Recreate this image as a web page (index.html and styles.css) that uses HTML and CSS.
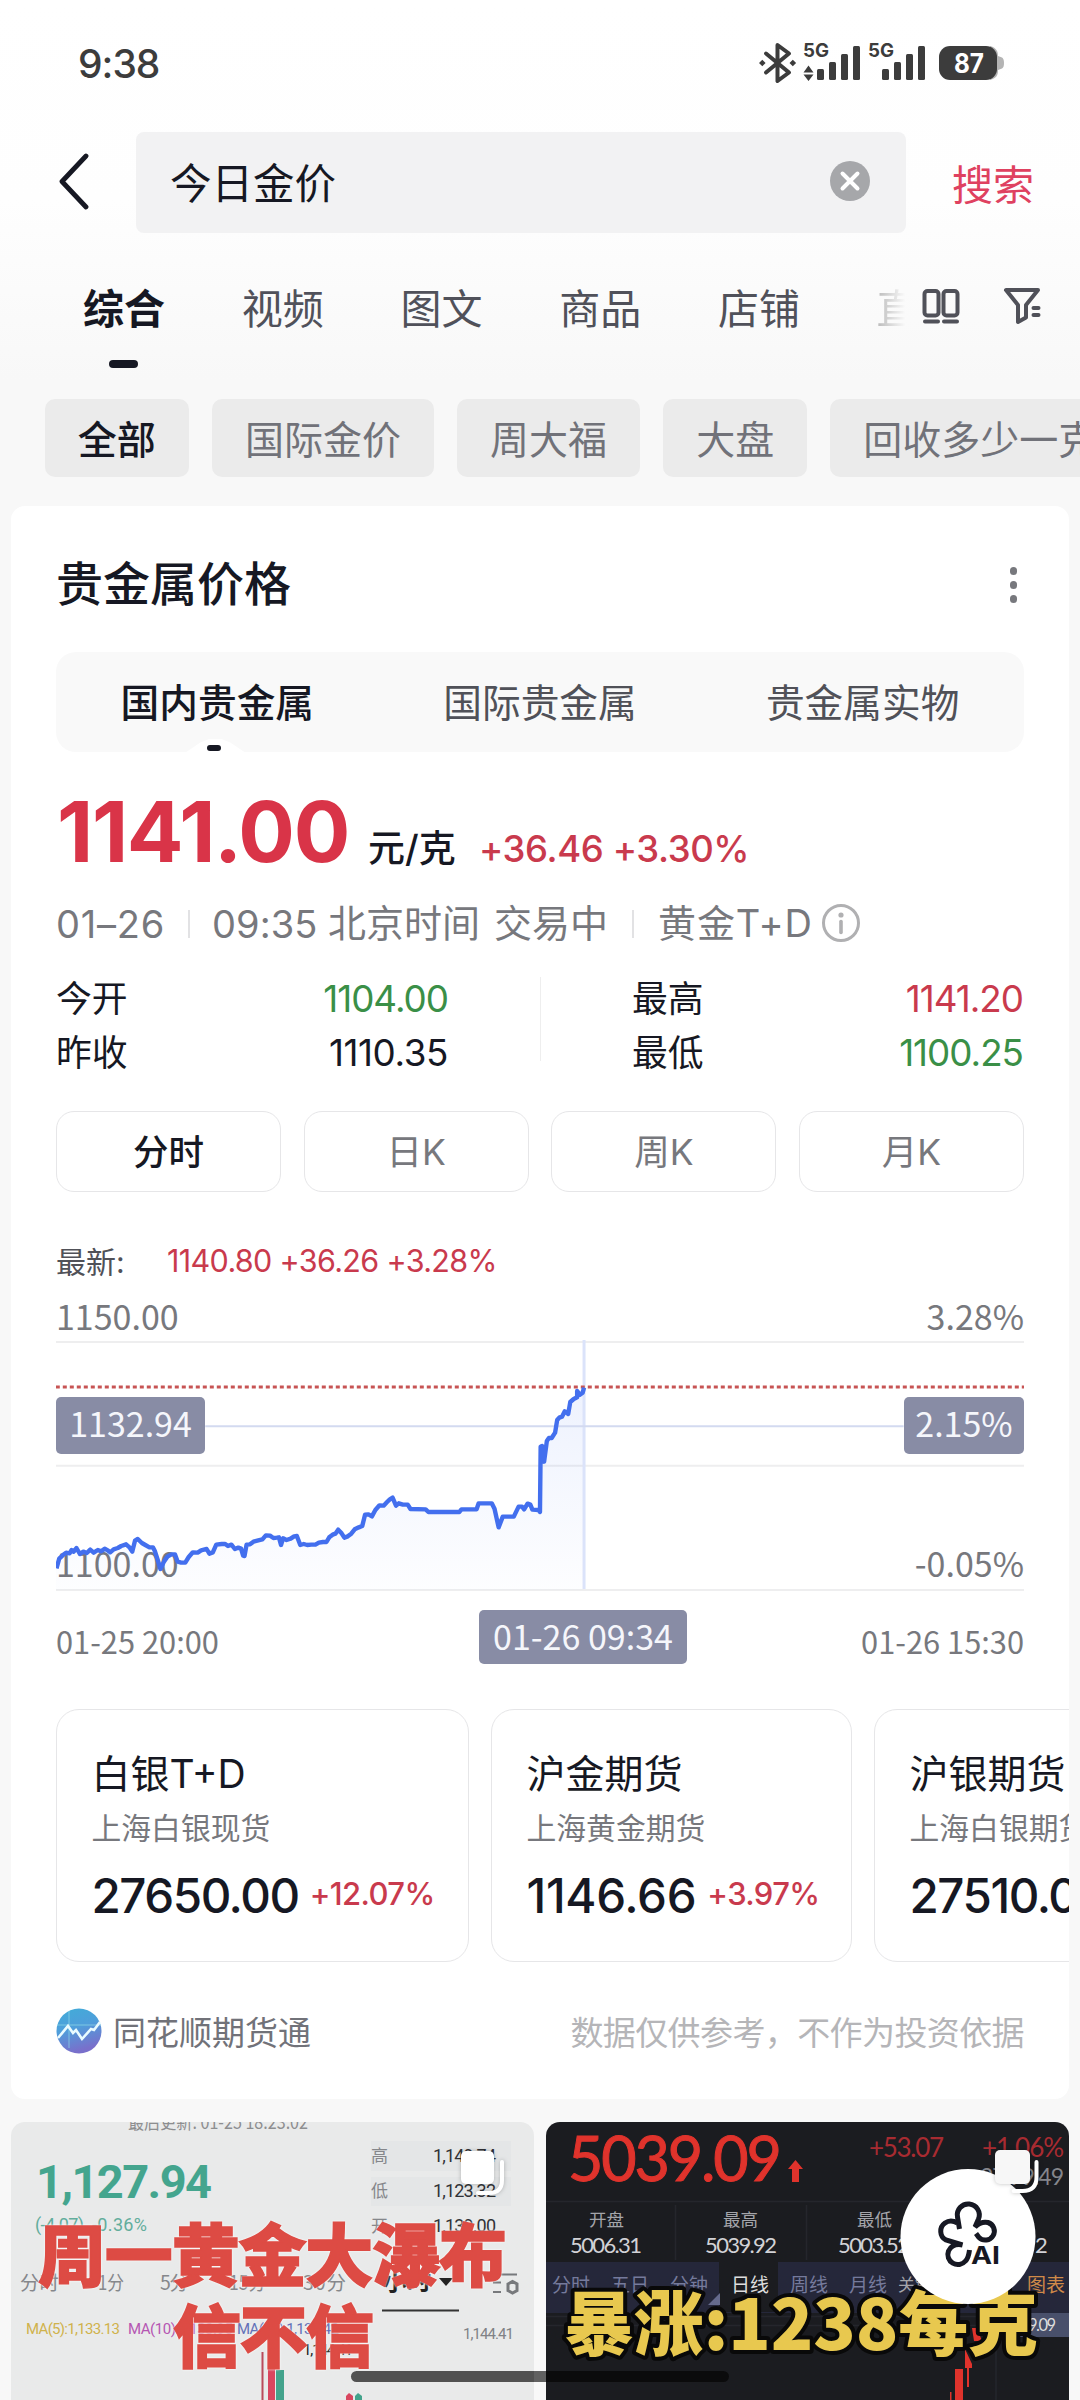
FILE: index.html
```html
<!DOCTYPE html>
<html lang="zh-CN">
<head>
<meta charset="utf-8">
<title>今日金价</title>
<link rel="stylesheet" href="styles.css">
</head>
<body>
<div class="screen">
  <header class="status">
    <span class="clock">9:38</span>
    <svg class="status-icons" width="250" height="50" viewBox="755 38 250 50">
      <g fill="none" stroke="#3c3c3c" stroke-width="4" stroke-linecap="round" stroke-linejoin="round">
        <path d="M766 53.500L789 72.500L777.500 81V45L789 53.500L766 72.500"/>
      </g>
      <g fill="#3c3c3c">
        <path d="M759 63l3.300-3.300 3.300 3.300-3.300 3.300zM789.500 63l3.300-3.300 3.300 3.300-3.300 3.300z"/>
        <path d="M803.500 72.500l5-7 5 7zM803.500 74.500l5 6.500 5-6.500z"/>
        <rect x="817" y="69" width="7" height="11" rx="1.500"/><rect x="829" y="62" width="7" height="18" rx="1.500"/><rect x="841" y="54" width="7" height="26" rx="1.500"/><rect x="853" y="46" width="7" height="34" rx="1.500"/>
        <rect x="882" y="69" width="7" height="11" rx="1.500"/><rect x="894" y="62" width="7" height="18" rx="1.500"/><rect x="906" y="54" width="7" height="26" rx="1.500"/><rect x="918" y="46" width="7" height="34" rx="1.500"/>
      </g>
      <path d="M990 46c7 2 8 6 8 10l4 1.500q2 1 2 5.500t-2 5.500l-4 1.500c0 5-1 8-8 10z" fill="#b4b4b4"/>
      <rect x="939" y="46" width="58" height="34" rx="11" fill="#3c3c3c"/>
      <g class="st-text" fill="#3c3c3c">
        <text x="803" y="57" font-size="18.500" textLength="26" lengthAdjust="spacingAndGlyphs">5G</text>
        <text x="868" y="57" font-size="18.500" textLength="26" lengthAdjust="spacingAndGlyphs">5G</text>
        <text x="954" y="73" font-size="27" fill="#fff" textLength="30" lengthAdjust="spacingAndGlyphs">87</text>
      </g>
    </svg>
  </header>

  <div class="search">
    <svg class="back" width="32" height="60" viewBox="0 0 32 60"><path d="M29 4L5 29.500L29 55" fill="none" stroke="#161823" stroke-width="4.800" stroke-linecap="round" stroke-linejoin="round"/></svg>
    <div class="field"><span>今日金价</span>
      <svg width="40" height="40" viewBox="0 0 40 40"><circle cx="20" cy="20" r="20" fill="#a6a7aa"/><path d="M12.500 12.500l15 15m0-15l-15 15" stroke="#fff" stroke-width="4" stroke-linecap="round"/></svg>
    </div>
    <span class="go">搜索</span>
  </div>

  <nav class="tabs">
    <div class="tab active">综合</div><div class="tab">视频</div><div class="tab">图文</div><div class="tab">商品</div><div class="tab">店铺</div><div class="tab cut">直</div>
    <svg class="tools" width="124" height="40" viewBox="920 286 124 40" fill="none" stroke="#505159" stroke-width="4" stroke-linecap="round" stroke-linejoin="round">
      <rect x="925.500" y="291" width="14" height="24.500" rx="3"/><rect x="944.500" y="291" width="14" height="24.500" rx="3"/><path d="M926 321.500h13M945 321.500h13"/>
      <path d="M1007 290h32L1027 305v12.500l-8 4.500v-17zM1034.500 308h5M1034.500 315h5"/>
    </svg>
  </nav>

  <div class="chips"><span class="chip on">全部</span><span class="chip">国际金价</span><span class="chip">周大福</span><span class="chip">大盘</span><span class="chip">回收多少一克</span></div>

  <section class="card">
    <div class="head"><h2>贵金属价格</h2><div class="dots"><i></i><i></i><i></i></div></div>
    <div class="seg"><span class="on">国内贵金属</span><span>国际贵金属</span><span>贵金属实物</span></div>
    <div class="price"><b>1141.00</b><span class="unit">元/克</span><span class="chg">+36.46 +3.30%</span></div>
    <div class="meta"><span class="m1">01–26</span><i></i><span class="m2">09:35</span><span class="m3">北京时间</span><span class="m3">交易中</span><i></i><span class="m4">黄金T+D</span>
      <svg width="40" height="40" viewBox="0 0 40 40"><circle cx="20" cy="20" r="17.500" fill="none" stroke="#b0b0b2" stroke-width="3"/><circle cx="20" cy="12" r="2.600" fill="#b0b0b2"/><path d="M20 18.500v11" stroke="#b0b0b2" stroke-width="3.600" stroke-linecap="round"/></svg>
    </div>
    <div class="stats">
      <dl><dt>今开</dt><dd class="down">1104.00</dd><dt>昨收</dt><dd class="prev">1110.35</dd></dl>
      <dl><dt>最高</dt><dd class="up">1141.20</dd><dt>最低</dt><dd class="down">1100.25</dd></dl>
    </div>
    <div class="periods"><span class="on">分时</span><span>日K</span><span>周K</span><span>月K</span></div>
    <div class="latest"><span>最新:</span><em>1140.80 +36.26 +3.28%</em></div>
    <div class="chart">
      <div class="axis top"><span>1150.00</span><span>3.28%</span></div>
      <div class="plot">
        <div class="axis low"><span>1100.00</span><span>-0.05%</span></div>
        <svg width="968" height="254" viewBox="81.300 150 1405.500 762" preserveAspectRatio="none">
          <defs><linearGradient id="fade" x1="0" y1="0" x2="0" y2="1"><stop offset="0" stop-color="#3f6df0" stop-opacity=".09"/><stop offset="1" stop-color="#3f6df0" stop-opacity=".01"/></linearGradient></defs>
          <g fill="none" stroke="#eeeeef" stroke-width="2"><path vector-effect="non-scaling-stroke" d="M81 156H1487M81 527H1487M81 900H1487"/></g>
          <path fill="url(#fade)" d="M81 835L88 795L110 782L190 770L200 748L225 775L233 835L250 795L262 820L290 785L320 765L352 785L390 735L430 745L440 765L470 758L490 725L505 742L530 680L550 650L570 625L580 645L620 663H668L692 658L695 640H715L724 712L730 680H747L755 650L783 665L786 468L793 490L795 445L805 430L812 385L825 365L830 325L848 293V900H81z"/>
          <path vector-effect="non-scaling-stroke" stroke="#dbe3fa" stroke-width="3" d="M848 150V897"/>
          <path vector-effect="non-scaling-stroke" stroke="#d3daf0" stroke-width="2" d="M298 409H1312"/>
          <path vector-effect="non-scaling-stroke" stroke="#c75454" stroke-width="3" stroke-dasharray="4 3" d="M81 291H1487"/>
          <path vector-effect="non-scaling-stroke" fill="none" stroke="#436fee" stroke-width="4.400" stroke-linejoin="round" d="M82 835L86 806L91 796L96 788L101 790L104 780L107 785L111 774L116 792L121 785L126 789L131 779L136 788L142 780L147 784L152 776L157 782L160 787L165 778L171 774L176 768L183 763L188 772L192 785L196 752L200 747L206 759L211 765L217 772L222 772L225 784L229 810L233 837L238 815L243 800L249 793L254 793L258 815L263 818L269 818L274 801L280 787L287 788L292 781L296 779L300 777L304 791L309 787L314 764L322 762L327 762L331 768L336 764L341 777L346 773L350 776L353 797L355 798L358 764L363 763L368 755L375 751L381 748L386 736L392 737L397 744L402 743L405 742L408 765L411 745L416 750L422 746L427 739L431 738L436 765L441 762L446 765L452 764L458 764L463 758L469 756L474 756L478 742L483 734L487 731L491 719L496 730L500 743L505 739L510 731L515 718L521 712L526 708L530 674L535 673L540 679L545 660L551 646L557 647L562 636L566 628L570 623L575 647L579 640L585 644L592 644L596 657L618 658L622 666H667L670 658H692L695 640H714L718 656L724 712L730 680H746L753 650H758L761 658L766 641L770 644L773 659L782 660L784 666L785 470L787 468L790 515L794 453L797 444L801 444L806 428L809 390L812 383L816 380L820 364L825 372L828 336L833 327L838 322L838 303L842 314L846 308L848 293"/>
        </svg>
        <span class="tag left">1132.94</span><span class="tag right">2.15%</span>
      </div>
      <div class="times"><span>01-25 20:00</span><span class="tag now">01-26 09:34</span><span>01-26 15:30</span></div>
    </div>
    <div class="quotes">
      <article class="q1"><h3>白银T+D</h3><p>上海白银现货</p><div><b>27650.00</b><em>+12.07%</em></div></article>
      <article class="q2"><h3>沪金期货</h3><p>上海黄金期货</p><div><b>1146.66</b><em>+3.97%</em></div></article>
      <article class="q3"><h3>沪银期货</h3><p>上海白银期货</p><div><b>27510.00</b></div></article>
    </div>
    <footer>
      <svg width="46" height="46" viewBox="0 0 46 46"><defs><linearGradient id="lg" x1="0" y1="0" x2="0.300" y2="1"><stop offset="0" stop-color="#41add8"/><stop offset=".5" stop-color="#4f9edb"/><stop offset="1" stop-color="#796fcb"/></linearGradient></defs><circle cx="23" cy="23" r="22.500" fill="url(#lg)"/><path d="M1 17H45M13 3V40" stroke="#8fd9e6" stroke-width="1" opacity=".7"/><path d="M2 30L12 18L17 25L20 22L26 31L35 21L38 22L44 14" fill="none" stroke="#e9fbff" stroke-width="2.600"/></svg>
      <span class="src">同花顺期货通</span><span class="note">数据仅供参考，不作为投资依据</span>
    </footer>
  </section>

  <div class="results">
    <svg class="thumb" width="523" height="278" viewBox="11 2122 523 278">
      <rect x="11" y="2122" width="523" height="278" fill="#e9eaea"/>
      <g fill="#e4e6e7"><rect x="371" y="2141" width="140" height="30"/><rect x="371" y="2177" width="140" height="29"/></g>
      <text x="128" y="2129" font-size="18" fill="#8d8e90" textLength="180" lengthAdjust="spacingAndGlyphs">最后更新: 01-25 18:23:02</text>
      <text class="din" x="36" y="2198" font-size="47" font-weight="700" fill="#44a58e" textLength="176">1,127.94</text>
      <g class="din" font-size="18"><text x="35" y="2231" fill="#62ad9c" textLength="49">(-4.07)</text><text x="92" y="2231" fill="#62ad9c" textLength="55">-0.36%</text>
        <g fill="#303236"><text x="433" y="2162" textLength="63">1,149.74</text><text x="433" y="2197" textLength="63">1,123.32</text><text x="433" y="2232" textLength="63">1,139.00</text></g></g>
      <g font-size="17" fill="#85878b"><text x="371" y="2162">高</text><text x="371" y="2197">低</text><text x="371" y="2232">开</text></g>
      <g font-size="19.500" fill="#85878b"><text x="20" y="2290">分时</text><text x="98" y="2290" textLength="26" lengthAdjust="spacingAndGlyphs">1分</text><text x="160" y="2290" textLength="29">5分</text><text x="229" y="2290" textLength="37" lengthAdjust="spacingAndGlyphs">15分</text><text x="303" y="2290" textLength="43">30分</text><text x="383" y="2290" font-size="24" font-weight="700" fill="#222">小时</text></g>
      <path d="M439 2278h14l-7 8z" fill="#222"/><path d="M382 2310.500h77" stroke="#333" stroke-width="2"/>
      <g fill="none" stroke="#77797c" stroke-width="2"><path d="M493 2282.500h8M493 2292h8M500 2274.500h17"/><path d="M508 2284l4.500-2.500 4.500 2.500v6.500l-4.500 2.500-4.500-2.500z" stroke-width="3"/></g>
      <g class="din" font-size="15"><text x="26" y="2334" fill="#d0b24c" textLength="94">MA(5):1,133.13</text><text x="128" y="2334" fill="#b556b2" textLength="105">MA(10):1,133.95</text><text x="237" y="2334" fill="#6270b8" textLength="102">MA(20):1,134.42</text><text x="463" y="2339" fill="#808286" textLength="51">1,144.41</text><text x="303" y="2355" fill="#222" textLength="50">1,144.41</text></g>
      <path d="M262.500 2352v48" stroke="#b94b5b" stroke-width="2"/><rect x="268" y="2368" width="7" height="32" fill="#d9465f"/><rect x="276" y="2370" width="8" height="30" fill="#43a38c"/>
      <path d="M346 2396l3-3 4 3v4h-7z" fill="#d9465f"/><path d="M355 2396l3-3 4 3v4h-7z" fill="#43a38c"/>
      <g class="headline" font-size="68" fill="#dd4b44" stroke="#dd4b44" stroke-width="1.500"><text x="38" y="2281" textLength="469">周一黄金大瀑布</text><text x="173" y="2362" textLength="201">信不信</text></g>
      <g class="stackicon"><path d="M502 2162v18q0 13-13 13h-11" fill="none" stroke="#fff" stroke-width="4" stroke-linecap="round"/><rect x="461" y="2151" width="33" height="33" rx="5" fill="#fff"/></g>
    </svg>
    <svg class="thumb" width="523" height="278" viewBox="546 2122 523 278">
      <rect x="546" y="2122" width="523" height="278" fill="#1b1c20"/>
      <rect x="546" y="2262" width="523" height="51" fill="#25273a"/><rect x="719" y="2262" width="59" height="50" fill="#1b1c20"/>
      <path d="M546 2201.500H1069M675.500 2205V2260M806.500 2205V2260M546 2316.500H1069M546 2325.500H1069M996 2337V2400" stroke="#25262c" stroke-width="1.500" fill="none"/>
      <path d="M708 2305h12v-12z" fill="#656a8c"/>
      <g class="lato"><text x="568" y="2181" font-size="61" fill="#e0332c" stroke="#e0332c" textLength="214">5039.09</text>
        <g font-size="26" fill="#a82b31"><text x="869" y="2157" textLength="75">+53.07</text><text x="982" y="2157" textLength="82">+1.06%</text></g>
        <text x="980" y="2185" font-size="23" fill="#85868c" textLength="84">27.99.49</text>
        <g font-size="22" fill="#d2d2d6"><text x="570" y="2253" textLength="72">5006.31</text><text x="705" y="2253" textLength="72">5039.92</text><text x="838" y="2253" textLength="72">5003.52</text><text x="1035" y="2253">2</text></g></g>
      <path d="M788 2169l7.500-9 7.500 9h-4v13h-7v-13z" fill="#e0332c"/>
      <g font-size="17.500" fill="#a4a5aa"><text x="589" y="2226">开盘</text><text x="723" y="2226">最高</text><text x="857" y="2226">最低</text></g>
      <g font-size="19" fill="#757a9c"><text x="552" y="2292">分时</text><text x="611" y="2292">五日</text><text x="670" y="2292">分钟</text><text x="731" y="2292" fill="#ddd">日线</text><text x="790" y="2292">周线</text><text x="849" y="2292">月线</text><text x="898" y="2291" font-size="17" fill="#a4a5aa">关键</text><text x="1027" y="2292" fill="#d08a49">图表</text></g>
      <rect x="1020" y="2313" width="49" height="24" fill="#49506b"/><text class="lato" x="1028" y="2331" font-size="16.500" fill="#ddd" textLength="28">9.09</text>
      <g fill="#e0332c"><path d="M972 2328h5l5 13h-8zM965 2349l7 15v4h-7z"/><rect x="967" y="2363" width="2" height="24"/><rect x="955" y="2369" width="8" height="31"/><rect x="950" y="2392" width="1.500" height="8"/></g>
      <text class="gold" x="564" y="2350" font-size="70" textLength="474" lengthAdjust="spacingAndGlyphs" fill="#e8c84f">暴涨:1238每克</text>
    </svg>
  </div>
  <svg class="fab" width="150" height="170" viewBox="895 2140 150 170">
    <circle cx="968" cy="2236.500" r="67.500" fill="#fff"/>
    <g class="stackicon"><path d="M1036.500 2162v15q0 14-14 14h-9" fill="none" stroke="#fff" stroke-width="4" stroke-linecap="round"/><rect x="995" y="2150" width="35" height="34" rx="5" fill="#f7f7f7"/></g>
    <g fill="none" stroke="#161823" stroke-width="5">
      <path d="M959.500 2229L957.500 2217a11 11 0 1 1 21 2L975 2227q6-6 13-4.500a9 9 0 1 1-9 15l-3-4"/>
      <path d="M957.500 2223q-7-4-12.500 0a10 10 0 0 0 1 17l16.500 5q-10-2-14 6a10 10 0 0 0 17 10q3-3 4-11"/>
    </g>
    <text class="st-text" x="971" y="2264" font-size="24" fill="#161823" textLength="29" lengthAdjust="spacingAndGlyphs">AI</text>
  </svg>
  <div class="homebar"></div>
</div>
</body>
</html>
```
FILE: styles.css
```css
* { box-sizing: border-box; margin: 0; padding: 0; }
body { width: 1080px; height: 2400px; overflow: hidden; font-family: Inter, "Noto Sans CJK SC", sans-serif; color: #161823; }
i, em { font-style: normal; }
span, b, em, h2, h3, p { white-space: nowrap; }
svg { display: block; flex: none; }
.screen { position: relative; width: 1080px; height: 2400px; overflow: hidden; background: linear-gradient(#fff 0, #fefefe 200px, #f8f8f8 380px); }
.st-text { font-family: Inter, sans-serif; font-weight: 700; }

.status { height: 132px; padding: 38px 75px 0 78px; display: flex; justify-content: space-between; }
.clock { font-size: 39px; line-height: 51px; font-weight: 500; color: #3c3c3c; letter-spacing: -1px; }

.search { height: 101px; display: flex; align-items: center; padding-left: 57px; }
.back { margin-top: -1px; }
.field { width: 770px; height: 101px; margin-left: 47px; padding: 0 36px 3px 34px; border-radius: 8px; background: #f2f2f3; display: flex; align-items: center; justify-content: space-between; font-size: 41.500px; }
.go { margin: -2px 0 0 46px; font-size: 41px; color: #df4160; }

.tabs { height: 166px; display: flex; padding-left: 44.500px; overflow: hidden; }
.tab { width: 158.800px; flex: none; text-align: center; font-size: 41px; line-height: 60px; padding-top: 46px; color: #50515a; }
.tab.active { color: #161823; font-weight: 700; }
.tab.active::after { content: ""; display: block; width: 29px; height: 8px; border-radius: 4px; margin: 21px auto 0; background: #161823; }
.tab.cut { width: 42px; margin-left: 38px; text-align: left; color: #777; -webkit-mask: linear-gradient(90deg, rgba(0,0,0,.5), transparent 70%); mask: linear-gradient(90deg, rgba(0,0,0,.5), transparent 70%); }
.tools { margin: 53px 0 0 1px; }

.chips { display: flex; gap: 23.500px; padding-left: 45px; height: 78px; }
.chip { flex: none; height: 78px; padding: 0 32.800px; border-radius: 10px; background: #ebebeb; font-size: 39px; line-height: 81px; color: #717279; }
.chip.on { color: #161823; font-weight: 500; }

.card { width: 1058px; height: 1593px; margin: 29px 11px 0; padding: 0 45px; border-radius: 14px; background: #fff; overflow: hidden; }
.head { height: 146px; padding-top: 44px; display: flex; justify-content: space-between; align-items: flex-start; }
.head h2 { font-size: 47px; line-height: 68px; font-weight: 500; }
.dots { display: flex; flex-direction: column; gap: 6.500px; margin: 17px 7px 0 0; }
.dots i { width: 7.500px; height: 7.500px; border-radius: 50%; background: #77787d; }

.seg { height: 100px; border-radius: 20px; background: #f9f9f9; display: grid; grid-template-columns: repeat(3, 1fr); }
.seg span { position: relative; text-align: center; font-size: 38.700px; line-height: 102px; color: #505158; }
.seg .on { font-weight: 500; color: #161823; }
.seg .on::before { content: ""; position: absolute; left: 50%; bottom: 0; width: 64px; height: 15px; margin-left: -34px; background: #fff; clip-path: polygon(0 100%, 26% 25%, 40% 0, 60% 0, 74% 25%, 100% 100%); }
.seg .on::after { content: ""; position: absolute; left: 50%; bottom: 3px; width: 14px; height: 6px; margin-left: -10px; border-radius: 3px; background: #161823; }

.price { height: 138px; display: flex; align-items: baseline; padding-top: 28px; line-height: 103px; }
.price b { width: 312px; padding-left: 1px; font-size: 84px; font-weight: 700; color: #d93448; letter-spacing: -1.300px; }
.unit { width: 111px; font-size: 37px; font-weight: 500; }
.chg { font-size: 36.500px; font-weight: 500; color: #c93a4d; letter-spacing: -.4px; }

.meta { height: 68px; display: flex; align-items: center; color: #77787d; font-size: 38px; line-height: 60px; }
.meta i { width: 2px; height: 28px; background: #e2e2e4; }
.m1 { width: 132px; letter-spacing: .8px; }
.m2 { width: 116px; margin-left: 22px; letter-spacing: .1px; }
.m3 { margin-right: 14px; }
.m3, .m4 { margin-top: -3px; }
.m3 + i { margin: 0 24px 0 10px; }
.m4 { letter-spacing: .9px; }
.meta svg { margin: -2px 0 0 8px; }

.stats { height: 98px; display: grid; grid-template-columns: 484px 484px; margin-top: 14px; }
.stats dl { display: grid; grid-template-columns: auto auto; justify-content: space-between; grid-auto-rows: 54px; line-height: 54px; font-size: 35.800px; padding-right: 92px; }
.stats dl + dl { padding: 0 1px 0 92px; background: linear-gradient(#eee, #eee) 0 5px / 1px 84px no-repeat; }
.stats dd { text-align: right; font-size: 36.800px; letter-spacing: -1px; }
.stats .prev { letter-spacing: -.4px; }
.down { color: #3a8f47; }
.up { color: #c93a4d; }

.periods { display: grid; grid-template-columns: repeat(4, 225px); justify-content: space-between; margin-top: 41px; }
.periods span { height: 81px; border: 1.500px solid #e6e6e8; border-radius: 18px; text-align: center; font-size: 35.500px; line-height: 81px; color: #77787d; }
.periods .on { color: #161823; font-weight: 500; }

.latest { height: 62px; margin-top: 37px; display: flex; align-items: center; font-size: 30px; color: #505158; }
.latest span { width: 111px; }
.latest em { color: #c93a4d; font-size: 30.500px; letter-spacing: -.65px; }

.chart { font-family: "Noto Sans CJK SC", sans-serif; color: #77787d; }
.axis { display: flex; justify-content: space-between; font-size: 34px; line-height: 50px; }
.axis.top { height: 49px; }
.plot { height: 254px; position: relative; }
.axis.low { position: absolute; inset: 198px 0 auto; }
.plot svg { position: relative; }
.tag { border-radius: 5px; background: #888ca5; color: #f5f6fb; font-size: 34px; text-align: center; }
.tag.left, .tag.right { position: absolute; top: 57px; height: 57px; line-height: 52px; }
.tag.left { left: 0; width: 149px; }
.tag.right { right: 0; width: 120px; }
.times { display: grid; grid-template-columns: 423px 208px 1fr; margin-top: 16px; font-size: 30.800px; line-height: 62px; }
.times span:last-child { text-align: right; }
.now { height: 54px; line-height: 52px; }

.quotes { display: flex; gap: 22px; margin-top: 37px; }
.quotes article { flex: none; height: 253px; padding: 35px 0 0 34.500px; border: 1.500px solid #e6e6e8; border-radius: 23px; }
.q1 { width: 413px; }
.q2 { width: 361px; }
.q3 { width: 413px; }
.quotes h3 { font-size: 39px; font-weight: 400; line-height: 58px; }
.quotes p { font-size: 29.800px; line-height: 50px; color: #77787d; }
.quotes div { display: flex; line-height: 86px; }
.quotes b { font-size: 47.500px; font-weight: 500; letter-spacing: -1.450px; }
.q2 b { letter-spacing: -.3px; }
.quotes em { margin-left: 11px; font-size: 31px; line-height: 81px; font-weight: 500; letter-spacing: -.6px; color: #c93a4d; }
.card footer { display: flex; align-items: center; height: 138px; font-size: 33px; }
.src { margin-left: 11px; color: #717279; }
.note { margin-left: auto; color: #b5b5b8; letter-spacing: -.6px; }

.results { display: flex; gap: 12px; padding: 23px 11px 0; }
.thumb { border-radius: 14px 14px 0 0; font-family: "Noto Sans CJK SC", sans-serif; }
.din { font-family: Roboto, sans-serif; }
.lato { font-family: Lato, sans-serif; }
.headline { font-weight: 900; filter: drop-shadow(0 0 1px #fff); }
.gold { font-weight: 900; paint-order: stroke; stroke: #090909; stroke-width: 8px; stroke-linejoin: round; }
.stackicon { filter: drop-shadow(0 0 2px rgba(0,0,0,.25)); }
.fab { position: absolute; left: 895px; top: 2140px; }
.homebar { position: absolute; left: 351px; top: 2371px; width: 378px; height: 11px; border-radius: 6px; background: linear-gradient(90deg, #515151 183px, #616161 183px, #616161 195px, #0b0b0c 195px); }
```
